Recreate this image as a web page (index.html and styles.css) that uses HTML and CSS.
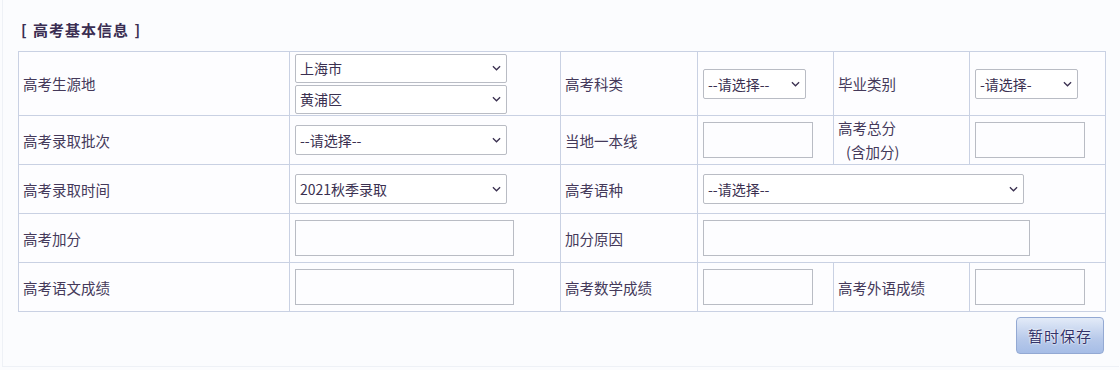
FILE: index.html
```html
<!DOCTYPE html>
<html lang="zh-CN">
<head>
<meta charset="utf-8">
<title>高考基本信息</title>
<link rel="stylesheet" href="styles.css">
</head>
<body>
<div class="page">
  <div class="title">[ 高考基本信息 ]</div>
  <table class="form">
    <colgroup>
      <col class="c1"><col class="c2"><col class="c3"><col class="c4"><col class="c5"><col class="c6">
    </colgroup>
    <tr class="r1">
      <td class="lbl">高考生源地</td>
      <td class="fld">
        <div class="stack">
          <span class="selwrap"><select class="sel wide tall29"><option>上海市</option></select><svg class="chev" viewBox="0 0 10 6"><path d="M1 1 L5 5 L9 1"/></svg></span>
          <span class="selwrap"><select class="sel wide tall29"><option>黄浦区</option></select><svg class="chev" viewBox="0 0 10 6"><path d="M1 1 L5 5 L9 1"/></svg></span>
        </div>
      </td>
      <td class="lbl">高考科类</td>
      <td class="fld"><span class="selwrap"><select class="sel small"><option>--请选择--</option></select><svg class="chev" viewBox="0 0 10 6"><path d="M1 1 L5 5 L9 1"/></svg></span></td>
      <td class="lbl">毕业类别</td>
      <td class="fld"><span class="selwrap"><select class="sel small"><option>-请选择-</option></select><svg class="chev" viewBox="0 0 10 6"><path d="M1 1 L5 5 L9 1"/></svg></span></td>
    </tr>
    <tr>
      <td class="lbl">高考录取批次</td>
      <td class="fld"><span class="selwrap"><select class="sel wide"><option>--请选择--</option></select><svg class="chev" viewBox="0 0 10 6"><path d="M1 1 L5 5 L9 1"/></svg></span></td>
      <td class="lbl">当地一本线</td>
      <td class="fld"><input class="inp short" type="text"></td>
      <td class="lbl two">高考总分<br><span class="sub">(含加分)</span></td>
      <td class="fld"><input class="inp short" type="text"></td>
    </tr>
    <tr>
      <td class="lbl">高考录取时间</td>
      <td class="fld"><span class="selwrap"><select class="sel wide"><option>2021秋季录取</option></select><svg class="chev" viewBox="0 0 10 6"><path d="M1 1 L5 5 L9 1"/></svg></span></td>
      <td class="lbl">高考语种</td>
      <td class="fld" colspan="3"><span class="selwrap"><select class="sel xwide"><option>--请选择--</option></select><svg class="chev" viewBox="0 0 10 6"><path d="M1 1 L5 5 L9 1"/></svg></span></td>
    </tr>
    <tr>
      <td class="lbl">高考加分</td>
      <td class="fld"><input class="inp long" type="text"></td>
      <td class="lbl">加分原因</td>
      <td class="fld" colspan="3"><input class="inp xlong" type="text"></td>
    </tr>
    <tr>
      <td class="lbl">高考语文成绩</td>
      <td class="fld"><input class="inp long" type="text"></td>
      <td class="lbl">高考数学成绩</td>
      <td class="fld"><input class="inp short" type="text"></td>
      <td class="lbl">高考外语成绩</td>
      <td class="fld"><input class="inp short" type="text"></td>
    </tr>
  </table>
  <div class="actions">
    <button class="btn" type="button">暂时保存</button>
  </div>
</div>
</body>
</html>
```

FILE: styles.css
```css
html, body {
  margin: 0;
  padding: 0;
  background: #fbfcfe;
}
body {
  font-family: "Noto Sans CJK SC", "Liberation Sans", sans-serif;
  color: #44395a;
  font-size: 14px;
}
.page {
  width: 1117px;
  height: 367px;
  box-sizing: border-box;
  border-left: 1px solid #eef1f6;
  border-bottom: 1px solid #eef1f6;
  margin-left: 2px;
  padding: 19px 15px 0 15px;
}
.title {
  font-weight: bold;
  font-size: 15px;
  line-height: 22px;
  height: 22px;
  padding-left: 3px;
  margin-bottom: 10px;
  color: #3a2e52;
  letter-spacing: 1px;
  word-spacing: 1px;
}
.form {
  border-collapse: collapse;
  width: 1087px;
  table-layout: fixed;
  background: #fdfdff;
}
.c1 { width: 271px; }
.c2 { width: 271px; }
.c3 { width: 137px; }
.c4 { width: 136px; }
.c5 { width: 136px; }
.c6 { width: 136px; }
.form td {
  border: 1px solid #c9d1e3;
  height: 48px;
  padding: 0;
  vertical-align: middle;
}
.form tr.r1 td { height: 63px; }
.lbl {
  padding-left: 4px !important;
  font-size: 14.5px;
  color: #44395a;
}
.lbl.two { line-height: 24px; }
.sub { padding-left: 8px; }
.fld { padding-left: 5px !important; }
.stack {
  display: flex;
  flex-direction: column;
  gap: 2px;
}
.selwrap {
  position: relative;
  display: inline-block;
  vertical-align: middle;
}
.stack .selwrap { display: block; width: 212px; }
.sel {
  -webkit-appearance: none;
  appearance: none;
  display: block;
  font-family: "Noto Sans CJK SC", "Liberation Sans", sans-serif;
  font-size: 14px;
  color: #3a3050;
  height: 30px;
  border: 1px solid #b9bcc4;
  border-radius: 2px;
  background-color: #ffffff;
  padding: 0 20px 0 4px;
  margin: 0;
}
.sel.tall29 { height: 29px; }
.sel.wide { width: 212px; }
.sel.small { width: 103px; }
.sel.xwide { width: 321px; }
.chev {
  position: absolute;
  right: 6px;
  top: 50%;
  width: 9px;
  height: 6px;
  margin-top: -3px;
  fill: none;
  stroke: #3a3050;
  stroke-width: 1.4;
  pointer-events: none;
}
.inp {
  height: 36px;
  box-sizing: border-box;
  border: 1px solid #b9bcc4;
  background: #fdfdff;
  padding: 0 4px;
  font-size: 14px;
  display: block;
  margin: 0;
}
.inp.short { width: 110px; }
.inp.long { width: 219px; }
.inp.xlong { width: 327px; }
.actions {
  display: flex;
  justify-content: flex-end;
  padding-top: 5px;
}
.btn {
  width: 88px;
  height: 37px;
  border: 1px solid #93a9d3;
  border-radius: 4px;
  background: linear-gradient(#e3ebf8, #b7c9ea 60%, #a6bde6);
  font-family: "Noto Sans CJK SC", sans-serif;
  font-size: 15px;
  color: #33336a;
  letter-spacing: 1px;
  text-shadow: 0 0 2px #ffffff, 0 0 2px #ffffff;
  padding: 0;
}
```
